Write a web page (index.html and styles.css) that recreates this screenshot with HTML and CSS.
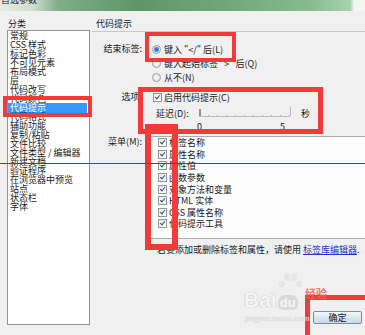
FILE: index.html
```html
<!DOCTYPE html>
<html lang="zh-CN">
<head>
    <meta charset="UTF-8">
    <meta name="viewport" content="width=device-width, initial-scale=1.0">
    <title>首选参数</title>
    <link rel="stylesheet" href="styles.css">
</head>
<body>
    <div class="titlebar"><span class="title-text">首选参数</span></div>

    <div class="dialog">
        <div class="left">
            <div class="heading">分类</div>
            <ul class="category-list">
                <li>常规</li>
                <li>CSS 样式</li>
                <li>标记色彩</li>
                <li>不可见元素</li>
                <li>布局模式</li>
                <li>层</li>
                <li>代码改写</li>
                <li>代码颜色</li>
                <li class="selected">代码提示</li>
                <li>代码格式</li>
                <li>辅助功能</li>
                <li>复制/粘贴</li>
                <li>文件比较</li>
                <li>文件类型 / 编辑器</li>
                <li>新建文档</li>
                <li>验证程序</li>
                <li>在浏览器中预览</li>
                <li>站点</li>
                <li>状态栏</li>
                <li>字体</li>
            </ul>
        </div>

        <div class="right">
            <div class="heading section-title">代码提示</div>

            <div class="row row-close">
                <div class="row-label">结束标签:</div>
                <div class="row-body">
                    <div class="option"><span class="radio checked"></span>键入 "&lt;/" 后(L)</div>
                    <div class="option"><span class="radio"></span>键入起始标签 "&gt;" 后(Q)</div>
                    <div class="option"><span class="radio"></span>从不(N)</div>
                </div>
            </div>

            <div class="row row-options">
                <div class="row-label">选项:</div>
                <div class="row-body">
                    <div class="option check-option"><span class="checkbox"></span>启用代码提示(C)</div>
                    <div class="delay">
                        <span class="delay-label">延迟(D):</span>
                        <span class="slider"><span class="thumb"></span></span>
                        <span class="unit">秒</span>
                    </div>
                    <div class="scale"><span>0</span><span>5</span></div>
                </div>
            </div>

            <div class="row row-menu">
                <div class="row-label menu-label">菜单(M):</div>
                <ul class="menu-list">
                    <li><span class="checkbox"></span>标签名称</li>
                    <li><span class="checkbox"></span>属性名称</li>
                    <li><span class="checkbox"></span>属性值</li>
                    <li><span class="checkbox"></span>函数参数</li>
                    <li><span class="checkbox"></span>对象方法和变量</li>
                    <li><span class="checkbox"></span>HTML 实体</li>
                    <li><span class="checkbox"></span>CSS 属性名称</li>
                    <li><span class="checkbox"></span>代码提示工具</li>
                </ul>
            </div>

            <p class="note">若要添加或删除标签和属性，请使用 <a href="#">标签库编辑器</a>.</p>

            <div class="buttons">
                <button class="ok-button">确定</button>
            </div>
        </div>
    </div>

    <!-- annotation marks and watermark over the screenshot -->
    <div class="mark mark-list"></div>
    <div class="mark mark-radio"></div>
    <div class="mark mark-options"></div>
    <div class="mark mark-menu"></div>
    <div class="mark mark-ok"></div>
    <div class="guide-line"></div>

    <div class="watermark">
        <svg class="wm-paw" width="24" height="20" viewBox="0 0 24 20">
            <ellipse cx="4" cy="12" rx="3" ry="3.5" fill="#e4e4e4"/>
            <ellipse cx="9" cy="5" rx="3" ry="4" fill="#e4e4e4"/>
            <ellipse cx="16" cy="5" rx="3" ry="4" fill="#e4e4e4"/>
            <ellipse cx="21" cy="12" rx="3" ry="3.5" fill="#e4e4e4"/>
        </svg>
        <span class="wm-bai">Bai</span><span class="wm-du">du</span><span class="wm-jy">经验</span>
        <span class="wm-url">jingyan.baidu.com</span>
    </div>
</body>
</html>
```

FILE: styles.css
```css
body {
    margin: 0;
    width: 365px;
    height: 335px;
    overflow: hidden;
    position: relative;
    background-color: #f0f0f0;
    font-family: "Noto Sans CJK SC", "DejaVu Sans", sans-serif;
    font-size: 9px;
    color: #1a1a1a;
}
ul {
    list-style: none;
    margin: 0;
    padding: 0;
}
.titlebar {
    height: 11px;
    overflow: hidden;
    background: linear-gradient(to right, #e6ece6 0%, #cfdcd0 9%, #7fae88 16%, #5d9669 38%, #6fa87a 62%, #86bb90 85%, #a9d3ae 96%, #f4f6f4 97%);
}
.title-text {
    display: block;
    margin-top: -5px;
    padding-left: 1px;
    line-height: 10px;
    color: #222;
}
.dialog {
    display: flex;
}
.heading {
    height: 19px;
    padding-top: 8px;
    line-height: 10px;
    box-sizing: border-box;
}
.left {
    width: 83px;
    margin-left: 7px;
    flex-shrink: 0;
}
.left .heading {
    padding-left: 1px;
}
.category-list {
    height: 295px;
    border: 1px solid #8e949c;
    background-color: #fff;
    box-sizing: border-box;
    padding-top: 0;
}
.category-list li {
    height: 9px;
    line-height: 9px;
    padding-left: 2px;
    margin-right: 2px;
    white-space: nowrap;
}
.category-list li.selected {
    background-color: #3399ff;
    color: #fff;
    height: 10px;
    line-height: 10px;
    margin-bottom: -1px;
}
.right {
    flex: 1;
    margin-left: 2px;
}
.section-title {
    height: 21px;
    padding-left: 4px;
    border-bottom: 1px solid #c9c9c9;
}
.row {
    display: flex;
}
.row-label {
    width: 50px;
    flex-shrink: 0;
    text-align: right;
    line-height: 14px;
    margin-right: 8px;
}
.row-close {
    margin-top: 10px;
}
.option {
    display: flex;
    align-items: center;
    height: 14px;
    white-space: nowrap;
}
.radio {
    width: 7px;
    height: 7px;
    margin: 0 3px 0 2px;
    border: 1px solid #9aa0a8;
    border-radius: 50%;
    background: radial-gradient(circle, #fafafa 0%, #d8dce0 100%);
    flex-shrink: 0;
}
.radio.checked {
    background: radial-gradient(circle, #2f6fc4 0, #4a8ad8 2px, #e4ecf6 3px, #d6dde6 100%);
}
.checkbox {
    position: relative;
    width: 7px;
    height: 7px;
    margin-right: 2px;
    border: 1px solid #8f969e;
    background: linear-gradient(#e8eaee, #fbfbfb);
    flex-shrink: 0;
}
.checkbox::after {
    content: "";
    position: absolute;
    left: 2px;
    top: 0;
    width: 2px;
    height: 4px;
    border: solid #3a4f7a;
    border-width: 0 1.5px 1.5px 0;
    transform: rotate(40deg);
}
.row-options {
    margin-top: 6px;
}
.check-option .checkbox {
    margin-left: 3px;
}
.delay {
    display: flex;
    align-items: center;
    height: 18px;
    padding-left: 6px;
}
.delay-label {
    width: 43px;
}
.slider {
    position: relative;
    width: 91px;
    height: 9px;
    border-bottom: 1px solid #b8bcc2;
    border-right: 1px solid #b8bcc2;
    border-radius: 0 0 3px 0;
    margin-top: -3px;
    background: repeating-linear-gradient(to right, #a8acb2 0, #a8acb2 1px, transparent 1px, transparent 9px) 0 100% / 100% 1px no-repeat;
}
.thumb {
    position: absolute;
    left: 0;
    top: 2px;
    width: 2px;
    height: 7px;
    background-color: #8d939a;
}
.unit {
    margin-left: 10px;
}
.scale {
    display: flex;
    justify-content: space-between;
    width: 88px;
    height: 10px;
    margin-left: 47px;
    line-height: 10px;
}
.row-menu {
    margin-top: 4px;
}
.menu-label {
    line-height: 12px;
}
.menu-list {
    flex: 1;
    height: 103px;
    margin-right: -2px;
    border: 1px solid #a8adb3;
    background-color: #fcfcfc;
    box-sizing: border-box;
}
.menu-list li {
    display: flex;
    align-items: center;
    height: 11.6px;
    padding-left: 7px;
    white-space: nowrap;
}
.note {
    margin: 5px 0 0 65px;
    line-height: 12px;
    white-space: nowrap;
}
.note a {
    color: #2233cc;
}
.buttons {
    display: flex;
    justify-content: flex-end;
    margin-top: 55px;
    padding-right: 3px;
}
.ok-button {
    width: 49px;
    height: 13px;
    padding: 0;
    font-family: inherit;
    font-size: 9px;
    line-height: 11px;
    color: #111;
    border: 1px solid #6d8fb0;
    border-radius: 2px;
    background: linear-gradient(#f4f8fc, #dbe6f0 50%, #c9d9e8);
}
.mark {
    position: absolute;
    border: 4px solid #f23a3a;
    box-sizing: border-box;
}
.mark-list {
    left: 3px;
    top: 96px;
    width: 89px;
    height: 21px;
}
.mark-radio {
    left: 145px;
    top: 32px;
    width: 91px;
    height: 30px;
}
.mark-options {
    left: 138px;
    top: 87px;
    width: 185px;
    height: 47px;
    border-width: 5px;
}
.mark-menu {
    left: 145px;
    top: 124px;
    width: 33px;
    height: 126px;
    border-width: 6px;
}
.mark-ok {
    left: 305px;
    top: 295px;
    width: 70px;
    height: 50px;
    border-width: 5px;
}
.guide-line {
    position: absolute;
    left: 0;
    top: 163px;
    width: 365px;
    height: 1px;
    background-color: #c41a1a;
}
.watermark {
    position: absolute;
    left: 244px;
    top: 288px;
    width: 100px;
    height: 40px;
    font-family: "Liberation Sans", Arial, sans-serif;
    opacity: 0.85;
}
.wm-paw {
    position: absolute;
    left: 34px;
    top: -16px;
}
.wm-bai {
    font-size: 21px;
    font-weight: bold;
    color: #f6f6f6;
    text-shadow: 0 0 1px #b8b8b8, 0 0 1px #b8b8b8;
}
.wm-du {
    display: inline-block;
    margin-left: 1px;
    padding: 0 2px;
    font-size: 13px;
    font-weight: bold;
    color: #f6f6f6;
    background-color: #d6d6d6;
    border-radius: 7px 7px 5px 5px;
}
.wm-jy {
    position: absolute;
    left: 61px;
    top: -3px;
    font-family: "Noto Sans CJK SC", sans-serif;
    font-size: 11px;
    font-weight: bold;
    color: #f0605a;
}
.wm-url {
    position: absolute;
    left: 1px;
    top: 26px;
    font-size: 8px;
    color: #e2e2e2;
    text-shadow: 0 0 1px #c6c6c6;
}
```
